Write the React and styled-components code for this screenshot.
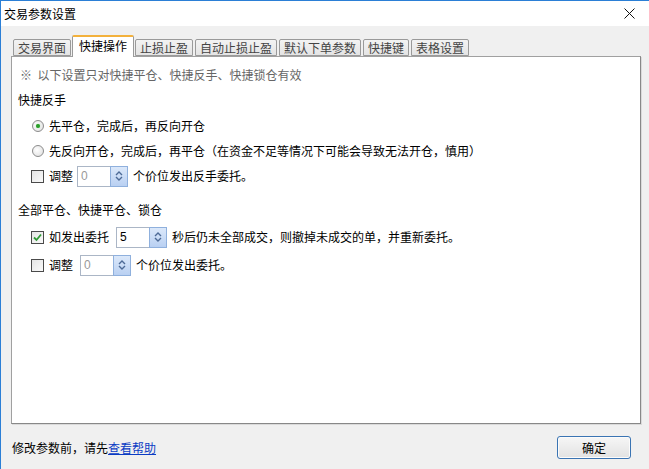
import React from "react";
import styled, { createGlobalStyle } from "styled-components";

const GlobalStyle = createGlobalStyle`
  html, body { margin: 0; padding: 0; background: #f0f0f0; }
  body {
    font-family: "Noto Sans CJK SC", "Noto Sans", "Liberation Sans", sans-serif;
    font-size: 12px;
    color: #000;
  }
`;

const Window = styled.div`
  width: 649px;
  height: 469px;
  box-sizing: border-box;
  border-top: 1px solid #2b7fd6;
  border-left: 1px solid #2b7fd6;
  display: flex;
  flex-direction: column;
  background: #f0f0f0;
  overflow: hidden;
`;

const TitleBar = styled.div`
  height: 25px;
  background: #fff;
  display: flex;
  align-items: center;
  justify-content: space-between;
  padding: 0 14px 0 3px;
  font-size: 12px;
  line-height: 14px;
`;

const CloseBtn = styled.div`
  width: 12px;
  height: 12px;
  display: flex;
  align-items: center;
  justify-content: center;
`;

const Body = styled.div`
  flex: 1;
  display: flex;
  flex-direction: column;
  padding: 9px 8px 0 10px;
`;

const TabBar = styled.div`
  height: 21px;
  display: flex;
  align-items: flex-end;
  gap: 2px;
  padding-left: 2px;
  position: relative;
  z-index: 1;
`;

const Tab = styled.div`
  box-sizing: border-box;
  height: ${(p) => (p.$active ? "22px" : "17px")};
  padding: ${(p) => (p.$active ? "1px 6px 0" : "0 4px")};
  margin: ${(p) => (p.$active ? "0 -1px -1px" : "0")};
  border: 1px solid #9a9a9a;
  border-bottom: ${(p) => (p.$active ? "none" : "1px solid #9a9a9a")};
  border-top: ${(p) => (p.$active ? "2px solid #f3b13c" : "1px solid #9a9a9a")};
  border-radius: 2px 2px 0 0;
  background: ${(p) =>
    p.$active ? "#fff" : "linear-gradient(#f3f3f3, #e4e4e4)"};
  color: ${(p) => (p.$active ? "#000" : "#444")};
  font-size: 12px;
  line-height: 15px;
  white-space: nowrap;
`;

const Panel = styled.div`
  height: 368px;
  box-sizing: border-box;
  width: 630px;
  background: #fff;
  border: 1px solid #a0a0a0;
  border-right-color: #888;
  border-bottom-color: #888;
  box-shadow: 1px 1px 0 #dadada;
  padding: 7px 0 0 6px;
`;

const Row = styled.div`
  height: 22px;
  display: flex;
  align-items: center;
  margin-top: ${(p) => p.$mt || 0}px;
  padding-left: ${(p) => p.$indent || 0}px;
  gap: ${(p) => p.$gap || 0}px;
  line-height: 14px;
  white-space: nowrap;
`;

const Note = styled(Row)`
  color: #666;
  padding-left: 2px;
`;

const Radio = styled.span`
  box-sizing: border-box;
  width: 12px;
  height: 12px;
  border-radius: 50%;
  border: 1px solid #8c8c8c;
  background: radial-gradient(circle at 40% 40%, #ffffff, #dcdcdc);
  display: inline-flex;
  align-items: center;
  justify-content: center;
  margin-right: 5px;
  &::after {
    content: "";
    width: 4px;
    height: 4px;
    border-radius: 50%;
    background: ${(p) => (p.$on ? "#2a9d2a" : "transparent")};
    box-shadow: ${(p) => (p.$on ? "0 0 1px #6bd06b" : "none")};
  }
`;

const Box = styled.span`
  box-sizing: border-box;
  width: 13px;
  height: 13px;
  border: 1px solid #4a4a4a;
  background: linear-gradient(135deg, #e4e4e4, #fafafa);
  display: inline-flex;
  align-items: center;
  justify-content: center;
  margin-right: 5px;
`;

const Spinner = styled.div`
  display: flex;
  height: 21px;
  width: 51px;
  box-sizing: border-box;
  margin: 0 5px 0 ${(p) => p.$left || 4}px;
`;

const SpinInput = styled.div`
  flex: 1;
  box-sizing: border-box;
  border: 1px solid #abb6c6;
  border-right: none;
  background: #fff;
  color: ${(p) => (p.$dim ? "#999" : "#000")};
  padding-left: 3px;
  font-family: "Liberation Sans", sans-serif;
  font-size: 12px;
  line-height: 19px;
`;

const SpinBtn = styled.div`
  width: 18px;
  box-sizing: border-box;
  border: 1px solid #8fb0dd;
  background: linear-gradient(#dbe8fa, #b9d0f2);
  display: flex;
  align-items: center;
  justify-content: center;
`;

const Footer = styled.div`
  flex: 1;
  display: flex;
  align-items: center;
  justify-content: space-between;
  padding: 2px 10px 0 1px;
  line-height: 14px;
`;

const Link = styled.a`
  color: #0b3cc4;
  text-decoration: underline;
`;

const OkButton = styled.button`
  width: 74px;
  height: 23px;
  border: 1px solid #3a74b3;
  border-radius: 3px;
  background: linear-gradient(#f6f6f6, #e2e2e2);
  box-shadow: inset 0 0 0 1px #fbfbfb;
  font-family: "Noto Sans CJK SC", sans-serif;
  font-size: 12px;
  line-height: 14px;
  color: #000;
  padding: 0;
`;

const Check = () => (
  <svg width="9" height="9" viewBox="0 0 9 9">
    <path d="M1 4.5 L3.5 7 L8 1.5" fill="none" stroke="#2f9a35" strokeWidth="1.8" />
  </svg>
);

const Spin = ({ value, left, dim }) => (
  <Spinner $left={left}>
    <SpinInput $dim={dim}>{value}</SpinInput>
    <SpinBtn>
      <svg width="8" height="12" viewBox="0 0 8 12">
        <path d="M1 5 L4 2 L7 5" fill="none" stroke="#4d6a96" strokeWidth="1.4" />
        <path d="M1 7 L4 10 L7 7" fill="none" stroke="#4d6a96" strokeWidth="1.4" />
      </svg>
    </SpinBtn>
  </Spinner>
);

const tabs = ["交易界面", "快捷操作", "止损止盈", "自动止损止盈", "默认下单参数", "快捷键", "表格设置"];

export default function App() {
  return (
    <>
      <GlobalStyle />
      <Window>
        <TitleBar>
          <span>交易参数设置</span>
          <CloseBtn>
            <svg width="11" height="11" viewBox="0 0 11 11">
              <path d="M0.5 0.5 L10.5 10.5 M10.5 0.5 L0.5 10.5" stroke="#111" strokeWidth="1" />
            </svg>
          </CloseBtn>
        </TitleBar>
        <Body>
          <TabBar>
            {tabs.map((t, i) => (
              <Tab key={t} $active={i === 1}>
                {t}
              </Tab>
            ))}
          </TabBar>
          <Panel>
            <Note>※&nbsp;&nbsp;以下设置只对快捷平仓、快捷反手、快捷锁仓有效</Note>
            <Row $mt={3}>快捷反手</Row>
            <Row $mt={4} $indent={14}>
              <Radio $on />
              先平仓，完成后，再反向开仓
            </Row>
            <Row $mt={3} $indent={14}>
              <Radio />
              先反向开仓，完成后，再平仓（在资金不足等情况下可能会导致无法开仓，慎用）
            </Row>
            <Row $mt={3} $indent={13}>
              <Box />
              调整
              <Spin value="0" left={4} dim />
              个价位发出反手委托。
            </Row>
            <Row $mt={12}>全部平仓、快捷平仓、锁仓</Row>
            <Row $mt={5} $indent={13}>
              <Box>
                <Check />
              </Box>
              如发出委托
              <Spin value="5" left={7} />
              秒后仍未全部成交，则撤掉未成交的单，并重新委托。
            </Row>
            <Row $mt={6} $indent={13}>
              <Box />
              调整
              <Spin value="0" left={7} dim />
              个价位发出委托。
            </Row>
          </Panel>
          <Footer>
            <span>
              修改参数前，请先<Link>查看帮助</Link>
            </span>
            <OkButton>确定</OkButton>
          </Footer>
        </Body>
      </Window>
    </>
  );
}
